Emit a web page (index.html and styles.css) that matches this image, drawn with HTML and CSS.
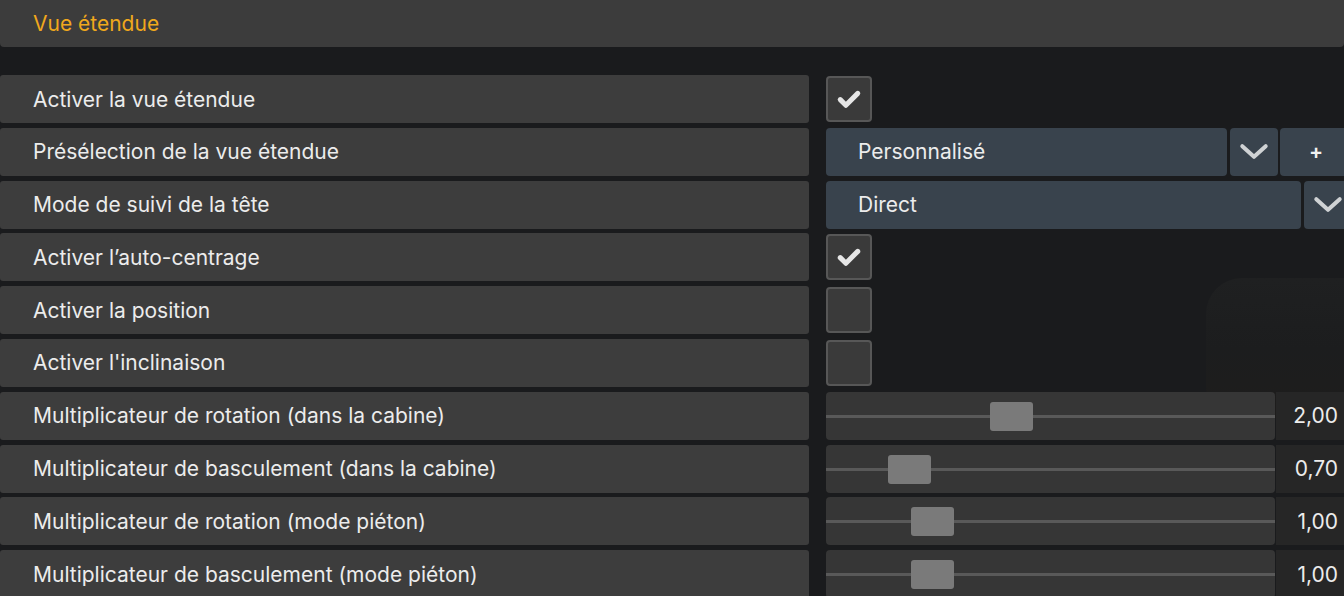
FILE: index.html
```html
<!DOCTYPE html>
<html lang="fr">
  <head>
    <meta charset="UTF-8" />
    <meta name="viewport" content="width=device-width, initial-scale=1.0" />
    <title>Vue étendue</title>
    <link rel="stylesheet" href="styles.css">
  </head>
  <body>
    <div class="backdrop"></div>
    <div class="section-title">Vue étendue</div>

    <div class="settings">
      <!-- cases à cocher -->
      <div class="row">
        <div class="label">Activer la vue étendue</div>
        <div class="control">
          <div class="checkbox checked">
            <svg viewBox="0 0 24 24"><path d="M5 12.5l4.5 4.5L19 7.5" /></svg>
          </div>
        </div>
      </div>

      <div class="row">
        <div class="label">Présélection de la vue étendue</div>
        <div class="control">
          <div class="select preset">Personnalisé</div>
          <div class="select-btn">
            <svg viewBox="0 0 28 16"><path d="M3 3l11 10L25 3" /></svg>
          </div>
          <div class="select-btn add">+</div>
        </div>
      </div>

      <div class="row">
        <div class="label">Mode de suivi de la tête</div>
        <div class="control">
          <div class="select mode">Direct</div>
          <div class="select-btn">
            <svg viewBox="0 0 28 16"><path d="M3 3l11 10L25 3" /></svg>
          </div>
        </div>
      </div>

      <div class="row">
        <div class="label">Activer l’auto-centrage</div>
        <div class="control">
          <div class="checkbox checked">
            <svg viewBox="0 0 24 24"><path d="M5 12.5l4.5 4.5L19 7.5" /></svg>
          </div>
        </div>
      </div>

      <div class="row">
        <div class="label">Activer la position</div>
        <div class="control">
          <div class="checkbox"></div>
        </div>
      </div>

      <div class="row">
        <div class="label">Activer l'inclinaison</div>
        <div class="control">
          <div class="checkbox"></div>
        </div>
      </div>

      <!-- curseurs -->
      <div class="row">
        <div class="label">Multiplicateur de rotation (dans la cabine)</div>
        <div class="control">
          <div class="slider"><div class="thumb" style="left: 164px;"></div></div>
          <div class="value">2,00</div>
        </div>
      </div>

      <div class="row">
        <div class="label">Multiplicateur de basculement (dans la cabine)</div>
        <div class="control">
          <div class="slider"><div class="thumb" style="left: 62px;"></div></div>
          <div class="value">0,70</div>
        </div>
      </div>

      <div class="row">
        <div class="label">Multiplicateur de rotation (mode piéton)</div>
        <div class="control">
          <div class="slider"><div class="thumb" style="left: 85px;"></div></div>
          <div class="value">1,00</div>
        </div>
      </div>

      <div class="row">
        <div class="label">Multiplicateur de basculement (mode piéton)</div>
        <div class="control">
          <div class="slider"><div class="thumb" style="left: 85px;"></div></div>
          <div class="value">1,00</div>
        </div>
      </div>
    </div>
  </body>
</html>
```

FILE: styles.css
```css
html, body {
  height: 100%;
}
body {
  margin: 0;
  padding: 0;
  background: #1a1b1d;
  color: #ececec;
  font-family: Inter, "Noto Sans", sans-serif;
  font-size: 21px;
  overflow: hidden;
  position: relative;
}
/* scène floue derrière le menu */
.backdrop {
  position: absolute;
  left: 1206px;
  top: 278px;
  width: 138px;
  height: 140px;
  border-radius: 36px 0 0 30px;
  background: linear-gradient(180deg, #1f2021, #1c1d1e 50%, #1e1d1c);
}
.section-title {
  position: relative;
  height: 47px;
  line-height: 47px;
  padding-left: 33px;
  background: #3c3c3c;
  color: #f0a81c;
  border-radius: 0 0 4px 4px;
}
.settings {
  position: relative;
  margin-top: 28px;
  display: flex;
  flex-direction: column;
  gap: 4.8px;
}
.row {
  display: flex;
  height: 48px;
  gap: 17px;
}
.label {
  width: 776px;
  flex-shrink: 0;
  padding-left: 33px;
  background: #3d3d3d;
  border-radius: 3px;
  display: flex;
  align-items: center;
}
.control {
  display: flex;
  align-items: stretch;
  flex: 1;
  min-width: 0;
  overflow: hidden;
}
.checkbox {
  width: 42px;
  height: 42px;
  margin-top: 1px;
  border: 2px solid #575757;
  border-radius: 4px;
  background: #3a3a3a;
  display: flex;
  align-items: center;
  justify-content: center;
}
.checkbox svg {
  width: 30px;
  height: 30px;
  fill: none;
  stroke: #e6e6e6;
  stroke-width: 4;
  stroke-linecap: round;
  stroke-linejoin: round;
}
.select {
  flex-shrink: 0;
  background: #39434d;
  border-radius: 4px;
  padding-left: 32px;
  display: flex;
  align-items: center;
}
.select.preset {
  width: 369px;
}
.select.mode {
  width: 443px;
}
.select-btn {
  flex-shrink: 0;
  width: 48px;
  margin-left: 2.5px;
  background: #39434d;
  border-radius: 4px;
  display: flex;
  align-items: center;
  justify-content: center;
}
.select-btn svg {
  width: 30px;
  height: 17px;
  fill: none;
  stroke: #cfd2d4;
  stroke-width: 3.8;
  stroke-linecap: round;
  stroke-linejoin: round;
}
.select-btn.add {
  width: 72px;
  color: #f2f2f2;
  font-size: 21px;
  font-weight: 600;
  justify-content: flex-start;
  padding-left: 29px;
}
.slider {
  position: relative;
  flex-shrink: 0;
  width: 449px;
  background: #363636;
  border-radius: 4px;
}
.slider::before {
  content: "";
  position: absolute;
  left: 0;
  right: 0;
  top: 23px;
  height: 3px;
  background: #595959;
}
.thumb {
  position: absolute;
  top: 10px;
  width: 43px;
  height: 29px;
  background: #7a7a7a;
  border-radius: 3px;
}
.value {
  flex: 1;
  margin-left: 1px;
  background: #262626;
  display: flex;
  align-items: center;
  justify-content: flex-end;
  padding-right: 6px;
}
```
